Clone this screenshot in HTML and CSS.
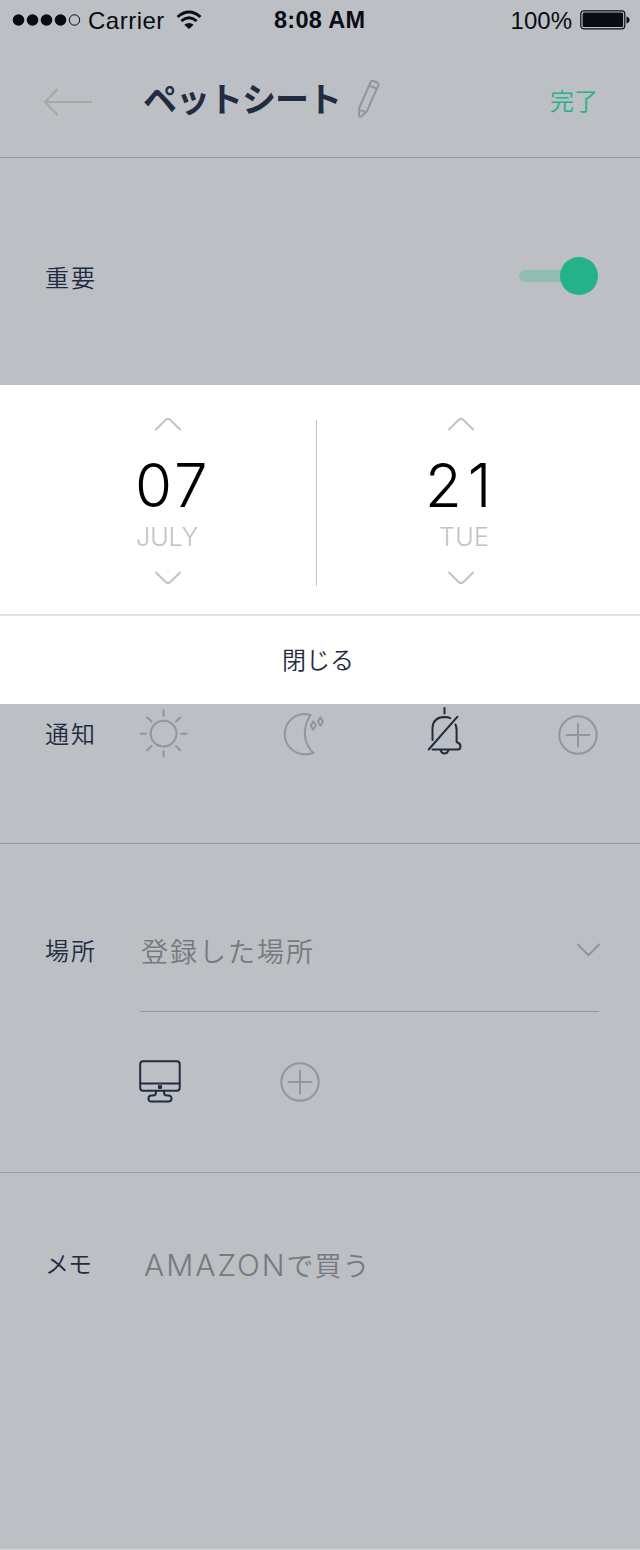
FILE: index.html
```html
<!DOCTYPE html>
<html lang="ja">
<head>
<meta charset="utf-8">
<title>ペットシート</title>
<link rel="stylesheet" href="styles.css">
</head>
<body>
<main class="screen">
  <div class="status">
    <div class="signal">
      <svg class="dots" width="70" height="14" viewBox="0 0 70 14"><g fill="#090c12"><circle cx="6.5" cy="7" r="5.8"/><circle cx="20.5" cy="7" r="5.8"/><circle cx="34.5" cy="7" r="5.8"/><circle cx="48.5" cy="7" r="5.8"/></g><circle cx="62.5" cy="7" r="5.2" fill="none" stroke="#090c12" stroke-width="1"/></svg>
      <span class="carrier">Carrier</span>
      <svg class="wifi" width="26" height="20" viewBox="0 0 26 20"><g fill="none" stroke="#090c12" stroke-width="2.900"><path d="M1.500 7Q13-3 24.500 7"/><path d="M5.300 11Q13 4.500 20.700 11"/></g><path d="M8.300 14.800Q13 11 17.700 14.800L13 19Z" fill="#090c12"/></svg>
    </div>
    <div class="time">8:08 AM</div>
    <div class="power">
      <span class="percent">100%</span>
      <svg width="50" height="20" viewBox="0 0 50 20"><rect x=".8" y=".8" width="44" height="18" rx="3" fill="none" stroke="#090c12" stroke-width="1.200"/><rect x="2.600" y="2.500" width="40.500" height="14.600" rx="1.500" fill="#090c12"/><path d="M46.500 6.500Q49.500 7.500 49.500 10T46.500 13.500Z" fill="#090c12"/></svg>
    </div>
  </div>

  <header class="nav">
    <svg class="back" width="50" height="28" viewBox="0 0 50 28"><path d="M14.500 1L2 14L14.500 27M2 14H49" fill="none" stroke="#a5a7ab" stroke-width="2"/></svg>
    <h1 class="title">ペットシート</h1>
    <svg class="pencil" width="24" height="40" viewBox="0 0 24 40" fill="none" stroke="#92959a" stroke-width="2" stroke-linejoin="round"><path d="M2 29.500L13.500 3.500Q14.500 1.200 17 2.100L20 3.300Q22.200 4.300 21.200 6.700L9.700 32.500L4.500 37.300Q2.300 38.600 2.200 36.500ZM12.300 6.500L19.800 9.700M2 32Q6 30.500 8.500 34"/></svg>
    <a class="done">完了</a>
  </header>

  <section class="important">
    <span class="label">重要</span>
    <div class="toggle"><span class="track"></span><span class="knob"></span></div>
  </section>

  <section class="picker">
    <div class="wheels">
      <div class="wheel month">
        <svg class="chev" width="28" height="14" viewBox="0 0 28 14"><path d="M2 12.500L11.300 3.200Q14 .5 16.700 3.200L26 12.500"/></svg>
        <div class="value">07</div>
        <div class="name">JULY</div>
        <svg class="chev" width="28" height="14" viewBox="0 0 28 14"><path d="M2 1.500L11.300 10.800Q14 13.500 16.700 10.800L26 1.500"/></svg>
      </div>
      <div class="divider"></div>
      <div class="wheel day">
        <svg class="chev" width="28" height="14" viewBox="0 0 28 14"><path d="M2 12.500L11.300 3.200Q14 .5 16.700 3.200L26 12.500"/></svg>
        <div class="value">21</div>
        <div class="name">TUE</div>
        <svg class="chev" width="28" height="14" viewBox="0 0 28 14"><path d="M2 1.500L11.300 10.800Q14 13.500 16.700 10.800L26 1.500"/></svg>
      </div>
    </div>
    <div class="close">閉じる</div>
  </section>

  <section class="notify">
    <span class="label">通知</span>
    <div class="options">
      <svg width="50" height="50" viewBox="0 0 50 50" class="muted"><circle cx="24.600" cy="24.600" r="12.900"/><path d="M24.600 1.500V7M24.600 42.200V47.500M1.500 24.800H7M42.200 24.800H47.500M8.200 8.500L12.500 12.500M41.200 8.500L37 12.500M8.200 41.200L12.500 37M41.200 41.200L37 37"/></svg>
      <svg width="44" height="44" viewBox="0 0 44 44" class="muted moon"><path d="M29.500 3Q26.500 2 22.500 2A20.200 20.200 0 0 0 22.500 42.300Q29 42.600 32.500 41C21.500 31 21.500 15 29.500 3Z"/><path d="M32.200 9.200L34.700 13.500L32.200 17.700L29.700 13.500ZM39.400 5.300L41.900 9.500L39.400 13.700L36.900 9.500Z"/></svg>
      <svg width="36" height="48" viewBox="0 0 36 48" class="dark bell"><path d="M17.500 1V6.500"/><path d="M5.500 33V21Q6 10.300 17.500 10Q21 10 23.200 11.200M28.500 17.500Q29.600 20 29.600 23V35Q33.500 36.500 33.500 39Q33.500 42.500 30.500 42.500H5.500M1.700 42.500L30.500 9.700M13.500 43Q14.500 46.500 17.500 46.500T21.500 43"/></svg>
      <svg width="40" height="40" viewBox="0 0 40 40" class="muted plus"><circle cx="20" cy="20" r="18.700"/><path d="M20 9V31.500M8.700 20H31.300"/></svg>
    </div>
  </section>

  <section class="place">
    <span class="label">場所</span>
    <div class="place-body">
      <div class="select">
        <span class="hint">登録した場所</span>
        <svg width="24" height="14" viewBox="0 0 24 14" class="muted"><path d="M2 1.500L12.500 12.300L23 1.500"/></svg>
      </div>
      <div class="devices">
        <svg width="42" height="43" viewBox="0 0 42 43" class="dark"><rect x="1.200" y="1.200" width="39.500" height="29.500" rx="3"/><path d="M1.200 23.500H40.700M17 31V32.500Q17 35.500 14 35.500H12.500Q9.500 35.500 9.500 38.600T12.500 41.500H29.500Q32.500 41.500 32.500 38.600T29.500 35.500H28Q25 35.500 25 32.500V31"/><circle cx="21" cy="27" r="1.200" fill="#222b3f"/></svg>
        <svg width="40" height="40" viewBox="0 0 40 40" class="muted"><circle cx="20" cy="20" r="18.700"/><path d="M20 8.500V31.500M8.500 20H31.500"/></svg>
      </div>
    </div>
  </section>

  <section class="memo">
    <span class="label">メモ</span>
    <div class="hint"><span class="latin">AMAZON</span><span class="kana">で買う</span></div>
  </section>
</main>
</body>
</html>
```

FILE: styles.css
```css
* { box-sizing: border-box; }
body { margin: 0; background: #d4d6d9; }
svg { display: block; flex: none; }
.screen {
  width: 640px;
  height: 1549px;
  background: #bcbfc4;
  color: #222b3f;
  font-family: "Noto Sans CJK JP", sans-serif;
  font-weight: 350;
  white-space: nowrap;
}

.status {
  display: flex;
  align-items: center;
  height: 40px;
  padding: 0 10px 0 12px;
  color: #090c12;
  font: 400 24px/41px "Liberation Sans", Arial, sans-serif;
}
.signal { display: flex; align-items: center; width: 262px; }
.carrier { width: 79px; margin-left: 6px; letter-spacing: .5px; }
.wifi { margin-left: 9px; }
.time { flex: 1; font-size: 23.5px; font-weight: 700; letter-spacing: .3px; }
.power { display: flex; align-items: center; gap: 8px; }

.nav {
  display: flex;
  align-items: center;
  height: 118px;
  padding: 5px 42px 0 43px;
  border-bottom: 1px solid #96999e;
}
.back { margin-top: 1px; }
.title { width: 210px; margin: -6px 0 0 50px; font-size: 34px; line-height: 50px; font-weight: 700; letter-spacing: -1px; }
.pencil { margin: -4px 0 0 4px; }
.done { margin: -3px 0 0 auto; color: #24b288; font-size: 24px; line-height: 36px; }

.label { flex: none; width: 95px; font-size: 24px; line-height: 36px; letter-spacing: 2px; }
.important {
  display: flex;
  align-items: center;
  justify-content: space-between;
  height: 227px;
  padding: 11px 42px 0 45px;
}
.toggle { display: flex; align-items: center; margin-bottom: 2px; }
.track { width: 60px; height: 12px; margin-right: -19px; border-radius: 6px; background: #8fbdb2; }
.knob { width: 38px; height: 38px; border-radius: 50%; background: #24b288; }

.picker { height: 319px; background: #fff; }
.wheels { display: flex; height: 231px; padding-top: 32px; border-bottom: 2px solid #e0e0e0; }
.wheel { display: flex; flex-direction: column; width: 316px; }
.divider { width: 1px; height: 166px; margin-top: 3px; background: #c2c2c2; }
.chev { fill: none; stroke: #c2c2c2; stroke-width: 2; stroke-linecap: round; }
.month .chev { margin-left: 154px; }
.day .chev { margin-left: 130px; }
.value { margin-top: 18px; color: #000; font: 300 60px/72px Inter, sans-serif; letter-spacing: 3px; }
.name { margin-top: -9px; height: 59px; color: #c2c2c2; font: 300 25px/50px Inter, sans-serif; }
.month .value { padding-left: 135px; }
.month .name { padding-left: 136px; }
.day .value { padding-left: 108px; letter-spacing: 6px; }
.day .name { padding-left: 122px; letter-spacing: .4px; }
.close { padding-left: 282px; font-size: 24px; line-height: 85px; }

.muted, .dark { fill: none; stroke: #92959a; stroke-width: 2; stroke-linecap: round; stroke-linejoin: round; }
.dark { stroke: #222b3f; }
.notify { display: flex; height: 140px; padding: 5px 42px 0 45px; border-bottom: 1px solid #92959a; }
.notify .label { margin-top: 6px; width: 94px; }
.options { display: flex; flex: 1; }
.moon { margin: 3px 0 0 92px; }
.bell { margin: -2px 0 0 102px; }
.plus { margin: 6px 0 0 auto; }

.place { display: flex; height: 329px; padding: 89px 41px 0 45px; border-bottom: 1px solid #9a9da2; }
.place .label { margin-top: -1px; }
.place-body { flex: 1; }
.select { display: flex; justify-content: space-between; height: 79px; border-bottom: 1px solid #92959a; }
.select svg { margin: 10px -1px 0 0; }
.hint { color: #76797e; font-size: 27px; line-height: 36px; letter-spacing: 2px; }
.select .hint { margin-left: 1px; }
.devices { display: flex; gap: 99px; padding-top: 48px; margin-left: -1px; }
.devices svg + svg { margin-top: 2px; }

.memo { display: flex; padding: 72px 0 0 45px; }
.memo .label { letter-spacing: -1px; }
.memo .hint { margin: 2px 0 0 4px; }
.latin { font: 300 30px/36px Inter, sans-serif; letter-spacing: 2px; }
.kana { letter-spacing: 1px; }
```
